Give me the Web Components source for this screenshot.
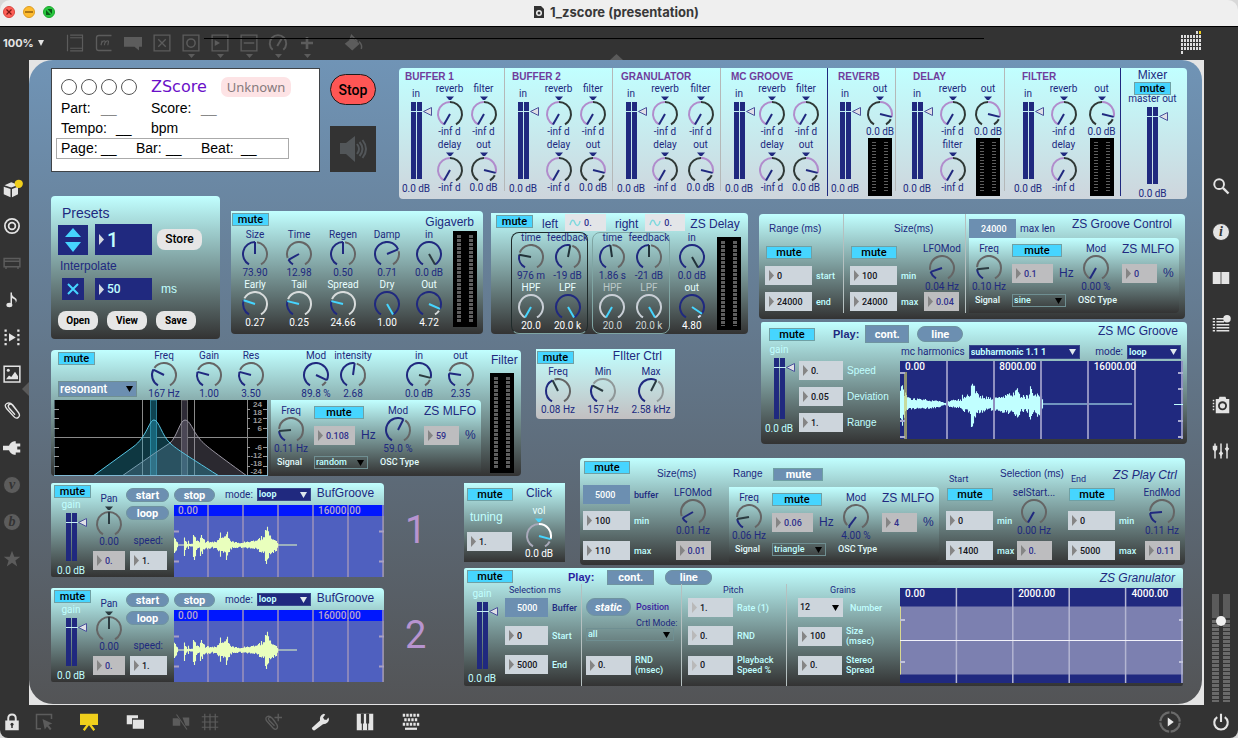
<!DOCTYPE html>
<html lang="en">
<head>
<meta charset="utf-8">
<title>1_zscore (presentation)</title>
<style>
html,body{margin:0;padding:0;background:#d8d8d8}
body{font-family:"Liberation Sans",Arial,sans-serif;font-size:10px;color:#20297f}
</style>
</head>
<body>
<zs-window></zs-window>
<script>
const NAVY='#20297f', CYAN='#c1ffff', SKY='#46d5ff';

const BASE = `
*{box-sizing:border-box}
:host{display:block;font:10px/12px "Liberation Sans",Arial,sans-serif;color:${NAVY}}
button{font:500 11px/11px Roboto,sans-serif;padding:0;margin:0;color:#000;white-space:nowrap;flex:none;display:block}
.mute{width:37px;height:13px;background:${SKY};border:1px solid #6fa0a4}
.mute.mid{width:46px}.mute.wide{width:50px}
.mute.off{background:#6c8fb1;color:#fff;font-weight:700}
.pill{height:14px;width:43px;border-radius:7px;background:#6c8fb1;border:1px solid #6f93a0;color:#fff;font-weight:700}
.sq{border-radius:0}
h2{font:12px/14px "Liberation Sans",Arial,sans-serif;margin:0;white-space:nowrap}
.panel{background:linear-gradient(#c1ffff,#333);border-radius:4px}
.row{display:flex}.col{display:flex;flex-direction:column}
.ice{color:${CYAN}}
.nw{white-space:nowrap}
`;
function define(tag, css, render){
  customElements.define(tag, class extends HTMLElement{
    connectedCallback(){
      if(this.shadowRoot) return;
      const root=this.attachShadow({mode:'open'});
      const t=document.createElement('template');
      t.innerHTML=`<style>${BASE}${css}</style>${render(this)}`;
      root.append(t.content.cloneNode(true));
    }
  });
}
const at=(e,n,d='')=>e.hasAttribute(n)?e.getAttribute(n):d;

/* rotary dial: label, arc with needle, value */
define('zs-dial',`
:host{width:36px;flex:none}
label{display:flex;flex-direction:column;align-items:center;position:relative;font:400 10px/12px Roboto,sans-serif;white-space:nowrap}
svg{display:block}
.t{color:var(--label,${NAVY})}.v{color:var(--value,${NAVY})}
input{position:absolute;left:0;top:12px;width:100%;height:26px;margin:0;opacity:0}
`,e=>{
  const a=+at(e,'a',-150), bi=e.hasAttribute('bi'), cy=bi?19:13, cx=14, R=12, h=bi?31:26;
  const fill=at(e,'fill',NAVY), rest=at(e,'rest','#656565'), needle=at(e,'needle',NAVY);
  const p=(d,r=R)=>(cx+r*Math.sin(d*Math.PI/180)).toFixed(2)+' '+(cy-r*Math.cos(d*Math.PI/180)).toFixed(2);
  const arc=(s,t,c)=>t-s<1?'':`<path d="M${p(s)}A${R} ${R} 0 ${t-s>180?1:0} 1 ${p(t)}" fill="none" stroke="${c}" stroke-width="2"/>`;
  let g='';
  if(bi){const lo=Math.min(0,a),hi=Math.max(0,a);g=arc(-150,lo,rest)+arc(lo,hi,fill)+arc(hi+(a>0?12:0),150,rest);}
  else g=arc(-150,a,fill)+arc(Math.min(150,a+(a>-150&&a<150?10:0)),150,rest);
  if(bi)g+=`<path d="M${cx-4} 1.5h8l-3 3.5h-2z" fill="${at(e,'tri',NAVY)}"/>`;
  g+=`<path d="M${cx} ${cy}L${p(a)}" stroke="${needle}" stroke-width="2"/>`;
  return `<label><span class="t">${at(e,'label')}</span><svg width="28" height="${h}" aria-hidden="true">${g}</svg><span class="v">${at(e,'value')}</span><input type="range" min="-150" max="150" value="${a}"></label>`;
});

/* two-bar gain slider */
define('zs-gain',`
:host{width:32px;flex:none}
label{display:flex;flex-direction:column;align-items:center;position:relative;font:400 10px/12px Roboto,sans-serif;white-space:nowrap;color:var(--gain,${NAVY})}
svg{display:block;overflow:visible;margin:2px 0 4px}
input{position:absolute;left:0;top:14px;width:100%;height:calc(100% - 28px);margin:0;opacity:0}
`,e=>{
  const h=+at(e,'h',77);
  return `<label><span>${at(e,'label')}</span><svg width="11" height="${h}" aria-hidden="true"><path d="M0 0h5v${h}h-5zM6 0h5v${h}h-5z" fill="${NAVY}"/><path d="M0 9.5h12" stroke="#c5eef3"/><path d="M12.500 9.500L20.500 5.500V13.500Z" fill="#dfdfe6" stroke="#4a519b"/></svg><span>0.0 dB</span><input type="range" value="80"></label>`;
});

/* number box with its caption */
define('zs-num',`
:host{flex:none}
label{display:flex;align-items:center}
.b{display:flex;align-items:center;gap:3px;padding-left:4px;height:var(--h,19px);background:#cdd5dc;color:#15151c;flex:none}
.b.gray{background:#bdbdbf;color:#30318c}
.b.navy{background:${NAVY};color:${CYAN}}
.b.max{background:#6c8fb1;color:#fff;padding-left:4px}
.b.wave{background:#e3e5e8;color:#30318c}
svg{display:block;flex:none}
input{font:500 var(--fs,9px)/12px Roboto,sans-serif;color:inherit;border:0;padding:0;margin:0;background:none;min-width:0;width:100%;outline:0}
.navy input{line-height:22px}
.c{margin-left:4px;color:var(--cap,${CYAN});white-space:pre-line;line-height:10px;font:var(--cf,500 9px/10px Roboto,sans-serif)}
`,e=>{
  const t=at(e,'tone'), w=at(e,'w',47), ic={max:'<svg width="5" height="1"></svg>',wave:'<svg width="12" height="8" fill="none" stroke="#7fd9de" stroke-width="1.500"><path d="M1 6C3-1 5 1 6 4S10 8 11 2"/></svg>'}[t]||`<svg width="5" height="11"><path d="M0 0L5 5.500L0 11Z" fill="${at(e,'tri','#858585')}"/></svg>`;
  const c=at(e,'label');
  return `<label><span class="b ${t}" style="width:${w}px">${ic}<input value="${at(e,'value')}" ${c?'':`aria-label="${at(e,'name','value')}"`}></span>${c?`<span class="c">${c}</span>`:''}</label>`;
});

/* drop-down */
define('zs-menu',`
:host{flex:none}
label{display:flex;align-items:center;gap:4px;color:${NAVY};font:400 10px/12px Roboto,sans-serif}
span.w{position:relative;display:block}
select{appearance:none;display:block;width:100%;height:var(--h,13px);border:1px solid var(--bd,#6f8f92);border-radius:0;margin:0;padding:0 0 0 1px;background:var(--bg,transparent);color:var(--fg,${CYAN});font:var(--fw,700) var(--fs,9px)/11px Roboto,sans-serif}
svg{position:absolute;right:4px;top:calc(50% - 3px);pointer-events:none}
`,e=>`<label>${at(e,'label')?`<span>${at(e,'label')}</span>`:''}<span class="w" style="width:${at(e,'w',54)}px"><select ${at(e,'label')?'':`aria-label="${at(e,'name','menu')}"`}><option>${at(e,'value')}</option></select><svg width="7" height="6"><path d="M0 0h7L3.500 6z" fill="${at(e,'tri','#000')}"/></svg></span></label>`);

/* level meter */
define('zs-meter',`
:host{width:24px;background:#000;flex:none;padding:4px;height:var(--mh,96px)}
div{height:100%;display:flex;justify-content:space-between}
i{width:4px;background:repeating-linear-gradient(#5e5e5e 0 var(--on,3px),#000 var(--on,3px) var(--pitch,4px))}
`,()=>`<div><i></i><i></i></div>`);

/* modulation LFO */
define('zs-mlfo',`
:host{height:75px;padding:5px 0 0 2px;display:grid;grid-template-columns:36px 69px 42px 1fr;grid-template-rows:51px 13px;column-gap:1px;background:linear-gradient(#c1ffff,#333);border-radius:0 4px 4px 0}
.hz{font:12px/19px "Liberation Sans",Arial,sans-serif}
.c2{padding:1px 0 0 4px;display:grid;grid-template-rows:20px 19px}
.c4{display:grid;grid-template-rows:21px 19px;padding-left:1px;white-space:nowrap}
h2{line-height:12px}
.row{gap:6px}
.lab{font:500 9px/13px Roboto,sans-serif;color:#e2fafa}
.foot{grid-column:1/-1;display:flex;padding-left:4px}
.foot b{width:37px;font-weight:500}.foot em{font-style:normal;margin-left:12px}
.foot zs-menu{--fw:500}
`,e=>`<zs-dial label="Freq" value="${at(e,'freq')}" a="${at(e,'fa')}" needle="#2b3b40"></zs-dial>
<div class="c2"><button class="mute wide">mute</button><div class="row"><zs-num tone="gray" w="41" value="${at(e,'hz')}" name="Hz"></zs-num><span class="hz">Hz</span></div></div>
<zs-dial label="Mod" value="${at(e,'mod')}" a="${at(e,'ma')}"></zs-dial>
<div class="c4"><h2>ZS MLFO</h2><div class="row"><zs-num tone="gray" w="35" value="${at(e,'pc')}" name="percent"></zs-num><span class="hz">%</span></div></div>
<div class="foot"><b class="lab">Signal</b><zs-menu value="${at(e,'sig')}" name="Signal"></zs-menu><em class="lab">OSC Type</em></div>`);

/* deterministic waveform outline from an envelope of [x, amplitude] pairs */
function wave(env,mid,color,seed){
  let s=seed,d='';
  const rnd=()=>{s=(s*16807)%2147483647;return s/2147483647;};
  for(let k=0;k<env.length-1;k++){
    const [x0,a0]=env[k],[x1,a1]=env[k+1];
    for(let x=x0;x<x1;x++){
      const a=a0+(a1-a0)*(x-x0)/(x1-x0), j=a<1?1:.55+.45*rnd(), u=Math.max(.5,a*j), l=Math.max(.5,a*(a<1?1:.55+.45*rnd()));
      d+=`M${x+.5} ${(mid-u).toFixed(1)}V${(mid+l).toFixed(1)}`;
    }
  }
  return `<path d="${d}" stroke="${color}" stroke-width="1.100" fill="none"/>`;
}
const WAVES={
  buf:{w:210,h:72,n:6,labels:['0.00','','','','16000.00'],draw:()=>{
    let g='<path d="M0 0h210v72h-210z" fill="#4f60bf"/><path d="M0 0h210v11h-210z" fill="#0017fe"/><path d="M209.500 11v61" stroke="#8a8a55"/>';
    for(let i=1;i<=6;i++)g+=`<path d="M${i*35-1} 0v72" stroke="#9c93bb" stroke-opacity=".75" stroke-width="2"/>`;
    g+='<path d="M0 26.500h5M0 56.500h5M205 26.500h5M205 56.500h5" stroke="#a9a0c4" stroke-width="2"/>';
    return g+wave([[0,13],[2,6],[4,.6],[9,.6],[10,11],[11,5],[13,1.5],[14,5],[15,1.500],[18,2],[19,17],[21,13],[22,6],[25,4],[26,13],[28,11],[29,7],[31,4],[34,5],[37,3],[42,4],[45,8],[46,14],[48,8],[51,9],[52,19],[53,17],[54,8],[58,4],[66,3],[74,4],[82,5],[87,9],[90,8],[91,25],[93,24],[94,18],[96,10],[102,6],[104,.5],[123,.5]],40,'#e9ffbd',77);
  }},
  mc:{w:283,h:78,n:6,labels:['0.00','','8000.00','','16000.00'],draw:()=>{
    let g=`<path d="M0 0h283v78h-283z" fill="${NAVY}"/>`;
    g+=wave([[0,24],[2,24],[4,14],[7,8],[10,6],[20,6],[38,4],[44,1],[48,3],[55,5],[61,5],[62,10],[65,8],[70,12],[71,28],[73,25],[75,15],[78,10],[90,7],[103,9],[110,11],[117,16],[120,9],[128,9],[130,18],[133,10],[138,15],[142,6],[143,.5],[232,.5]],43,CYAN,31);
    for(let i=1;i<=6;i++)g+=`<path d="M${i*47} 0v78" stroke="#8f90c0" stroke-width="2"/>`;
    return g+'<path d="M4 11h3v67h-3z" fill="#c9c96a" fill-opacity=".65"/><path d="M0 12h5M0 60h5M0 76h5M278 12h5M278 28h5M278 60h5M278 76h5" stroke="#a9abd0" stroke-width="2"/><path d="M274 43.500h9" stroke="#c1ffff"/>';
  }},
  gran:{w:283,h:95,n:5,labels:['0.00','','2000.00','','4000.00'],draw:()=>{
    let g=`<path d="M0 0h283v95h-283z" fill="${NAVY}"/><path d="M0 18.500h283v68h-283z" fill="#7c80b0"/><path d="M.5 18.500v68" stroke="#d8d890"/>`;
    for(let i=1;i<=5;i++)g+=`<path d="M${i*56.4} 0v95" stroke="#b3b5d2" stroke-width="1.500"/>`;
    return g+'<path d="M0 52.500h283" stroke="#f2f2fa"/><path d="M0 32h5M0 74h5M279 32h4M279 74h4" stroke="#c0c2da" stroke-width="2"/>';
  }}
};
define('zs-wave',`
:host{position:relative;min-width:0}
svg{position:absolute;left:0;top:0;width:100%;height:100%}
div{position:relative;display:grid;font:500 10px/12px Roboto,sans-serif;color:var(--wl,#fff)}
span{padding-left:var(--wp,5px);white-space:nowrap;min-width:0}
`,e=>{const k=WAVES[at(e,'kind')];return `<svg viewBox="0 0 ${k.w} ${k.h}" preserveAspectRatio="none" aria-hidden="true">${k.draw()}</svg><div style="grid-template-columns:repeat(${k.n},1fr)">${k.labels.map(t=>`<span>${t}</span>`).join('')}</div>`;});

/* score status */
define('zs-score',`
:host{width:269px;height:104px;background:#fff;border:1px solid #3f4347;padding:7px 4px 0;font-size:14px;line-height:20px;color:#000}
.g{display:grid;grid-template-columns:40px 50px 50px auto;padding-left:5px;height:20px;white-space:nowrap}
.top{display:flex;align-items:center;padding-left:5px;height:22px}
.top svg{margin-right:14px}
.top b{font:16px/20px "DejaVu Sans",sans-serif;color:#6a10c8;width:70px}
.top span{background:#fde3e5;border-radius:7px;font:13px/20px "Noto Sans",sans-serif;color:#857a7c;width:70px;text-align:center}
.box{border:1px solid #aaa;width:233px;display:grid;grid-template-columns:40px 35px 30px 35px 40px auto;padding-left:4px;height:21px;line-height:19px;white-space:nowrap}
u{text-decoration:none;color:#888}u.k{color:#000}
`,()=>`<div class="top"><svg width="76" height="18" fill="none" stroke="#555"><circle cx="8" cy="9" r="7.500"/><circle cx="28" cy="9" r="7.500"/><circle cx="48" cy="9" r="7.500"/><circle cx="68" cy="9" r="7.500"/></svg><b>ZScore</b><span>Unknown</span></div>
<div class="g"><span>Part:</span><u>__</u><span>Score:</span><u>__</u></div>
<div class="g" style="grid-template-columns:55px 35px auto"><span>Tempo:</span><u class="k">__</u><span>bpm</span></div>
<div class="box"><span>Page:</span><u class="k">__</u><span>Bar:</span><u class="k">__</u><span>Beat:</span><u class="k">__</u></div>`);

/* mixer */
define('zs-channel',`
:host{width:var(--cw);flex:none;padding-top:3px;border-right:1px solid var(--div,#b5b8b8)}
h3{font:700 10px/12px "Liberation Sans",Arial,sans-serif;color:#6f3c9c;margin:0;padding-left:var(--tp);white-space:nowrap}
.g{display:grid;grid-template-columns:var(--cols,34px 33px 35px);margin-left:var(--lead,0)}
.s{padding-top:5px;width:34px}
.d{display:grid;row-gap:1px;justify-items:center;align-content:start}
zs-dial{width:30px}
zs-meter{--mh:58px;--on:1px;--pitch:3px}
.mt{row-gap:0}
`,e=>{
  const P='#b18ccc';
  const cell=t=>t==='meter'?'<zs-meter></zs-meter>':`<zs-dial bi label="${t}" value="${t==='out'?'0.0 dB':'-inf d'}" a="${t==='out'?104:-150}" fill="${P}" rest="#2f3836"></zs-dial>`;
  return `<h3>${at(e,'name')}</h3><div class="g"><zs-gain class="s" label="in" h="77"></zs-gain>${at(e,'cells').split('|').map(c=>`<div class="d ${c.includes('meter')?'mt':''}">${c.split(',').map(cell).join('')}</div>`).join('')}</div>`;
});
define('zs-mixer',`
:host{flex:1;height:131px;background:linear-gradient(#c1ffff,#ced5dc);border-radius:4px;display:flex}
zs-channel{height:123px}
zs-channel.navy{height:128px}
.out{flex:1;display:flex;flex-direction:column;align-items:center;padding:1px 3px 0 0}
.out h2{line-height:13px}
.out zs-gain{margin-top:-2px}
`,()=>{
  const c=(n,w,tp,cells,x='')=>`<zs-channel class="${x.includes('div')?'navy':''}" name="${n}" cells="${cells}" style="--cw:${w}px;--tp:${tp}px;${x}"></zs-channel>`;
  const q='reverb,delay|filter,out';
  return c('BUFFER 1',106,6,q)+c('BUFFER 2',108,7,q,'--lead:1px;--cols:34px 37px 32px')+c('GRANULATOR',108,8,q,'--lead:1px;--cols:34px 34px 37px')+c('MC GROOVE',107,10,q,'--lead:1px;--cols:34px 32px 36px;--div:#20297f')
  +c('REVERB',68,10,'out,meter','--cols:33px 38px')+c('DELAY',109,17,'reverb,filter|out,meter','--lead:4px;--cols:34px 37px 34px')+c('FILTER',116,17,'reverb,delay|out,meter','--lead:6px;--cols:33px 39px 37px;--div:#20297f')
  +`<div class="out"><h2>Mixer</h2><button class="mute">mute</button><zs-gain label="master out" h="77"></zs-gain></div>`;
});

define('zs-presets',`
:host{width:169px;height:143px}
.panel{height:100%;padding:8px 7px 0}
h2{font-size:14px;line-height:18px;padding-left:4px}
.r{display:flex;align-items:center}
.ud{width:30px;height:30px;background:${NAVY};border:0}
.big{--h:31px;--fs:20px;margin:0 5px 0 7px}
.b{border:0;background:#e6e6e6;border-radius:8px}
.x{width:22px;height:22px;background:${NAVY};border:0;margin:0 11px 0 4px}
.sm{--h:22px;--fs:12px}
.f{display:flex;justify-content:flex-start;gap:9px;margin-top:11px}
.f .b{height:19px;width:40px;font-weight:700;font-size:10px}
`,()=>`<div class="panel"><h2>Presets</h2><div class="r" style="margin-top:2px"><button class="ud" aria-label="Step preset"><svg width="30" height="30" style="display:block"><path d="M7 12L15 3L23 12ZM7 17H23L15 27Z" fill="${SKY}"/></svg></button><zs-num class="big" tone="navy" w="57" value="1" tri="#d4d8e0" name="Preset"></zs-num><button class="b" style="width:45px;height:21px;font-size:12px">Store</button></div>
<h2 style="font-size:12px;line-height:23px;padding-left:2px">Interpolate</h2>
<div class="r"><button class="x" aria-label="Interpolate"><svg width="22" height="22" style="display:block"><path d="M6 6L16 16M16 6L6 16" stroke="${SKY}" stroke-width="2"/></svg></button><zs-num class="sm" tone="navy" w="57" value="50" tri="#d4d8e0" name="Interpolate time"></zs-num><span class="ice" style="font-size:12px;margin-left:9px">ms</span></div>
<div class="f"><button class="b">Open</button><button class="b">View</button><button class="b">Save</button></div></div>`);

define('zs-gigaverb',`
:host{width:252px;height:123px;margin-top:15px}
.panel{height:100%;padding:2px 6px 0 1px;border-radius:0 4px 4px 4px}
.h{justify-content:space-between;height:16px;padding-right:3px}
.h h2{line-height:18px}
.b{justify-content:space-between}
.g{display:grid;grid-template-columns:44px 44px 44px 44px 40px;justify-items:center;padding-left:1px}
.w{--label:#e8fefe;--value:#fff}
zs-meter{margin-top:2px}
`,()=>{
  const r=[['Size','73.90',0],['Time','12.98',-119],['Regen','0.50',0],['Damp','0.71',67],['in','0.0 dB',150,'#2b3b40']];
  const s=[['Early','0.27',-72],['Tail','0.25',-76],['Spread','24.66',-76],['Dry','1.00',150],['Out','4.72',114]];
  return `<div class="panel"><div class="row h"><button class="mute">mute</button><h2>Gigaverb</h2></div><div class="row b"><div class="g">${r.map(d=>`<zs-dial label="${d[0]}" value="${d[1]}" a="${d[2]}" needle="${d[3]||NAVY}"></zs-dial>`).join('')}${s.map(d=>`<zs-dial class="w" label="${d[0]}" value="${d[1]}" a="${d[2]}" needle="${SKY}" rest="#d8dcdc"></zs-dial>`).join('')}</div><zs-meter></zs-meter></div></div>`;
});

define('zs-delay',`
:host{width:257px;height:121px;margin-top:17px}
.panel{height:100%;border-radius:0 4px 4px 4px;padding:0 7px 0 5px}
.h{height:19px;gap:9px}
.h .mute{margin-top:2px}.h h2{line-height:22px}
.h zs-num{--h:17px;margin-top:1px}
.b{padding-left:15px}
.box{width:79px;height:102px;border:1px solid #1f2a2a;border-bottom-color:#7fa5a3;border-radius:8px;display:grid;grid-template-columns:36px 37px;margin-right:4px;padding-left:1px}
.box zs-dial{margin:-1px 0 1px;justify-self:center}
.box.r{border-color:#7fa5a3}
.io{width:38px;padding-top:0}
.w{--label:#e8fefe;--value:#fff}
.r .w{--label:#bcc8c8;--value:#cfd6d6}
zs-meter{margin:5px 0 0 6px;--mh:93px}
`,()=>{
  const D=(l,v,a,n,c='',rest='#656565')=>`<zs-dial class="${c}" label="${l}" value="${v}" a="${a}" needle="${n}" rest="${rest}"></zs-dial>`;
  const K='#22333a';
  return `<div class="panel"><div class="row h"><button class="mute">mute</button><h2>left</h2><zs-num tone="wave" w="41" value="0." name="left" style="margin-left:-2px"></zs-num><h2>right</h2><zs-num tone="wave" w="40" value="0." name="right" style="margin-left:-2px"></zs-num><h2 style="margin-left:-4px">ZS Delay</h2></div>
<div class="row b"><div class="box">${D('time','976 m',-79,K)}${D('feedback','-19 dB',11,K)}${D('HPF','20.0',-150,SKY,'w','#c9cfd6')}${D('LPF','20.0 k',150,SKY,'w')}</div>
<div class="box r">${D('time','1.86 s',-8,K)}${D('feedback','-21 dB',0,K)}${D('HPF','20.0',-150,SKY,'w','#c9cfd6')}<zs-dial class="w" label="LPF" value="20.0 k" a="150" needle="${SKY}" fill="#c9cfd6"></zs-dial></div>
<div class="io">${D('in','0.0 dB',150,K)}${D('out','4.80',124,SKY,'w','#dde')}</div><zs-meter></zs-meter></div></div>`;
});

define('zs-groove-control',`
:host{height:105px;margin-right:2px}
.panel{height:100%;display:flex}
.c{display:grid;grid-template-rows:29px 23px 26px 21px;height:99px;border-right:1px solid #b5c0c0;padding-left:6px;align-items:start;flex:none}
.c>span{padding:9px 0 0 4px}
.mute{margin:3px 0 0 1px}
.c2{grid-template-columns:74px 42px}
.c2>span{grid-column:1/3;padding-left:44px}
.c2 zs-dial{grid-row:2/4;grid-column:2}
.c2 .mute,.c2 .n{grid-column:1}
.c3{flex:1;padding-left:3px;min-width:0}
.t{height:24px;display:flex;justify-content:space-between;padding-right:13px}
.t h2{line-height:20px}
.t zs-num{margin-top:5px;--cf:400 10px/10px Roboto,sans-serif;--cap:${NAVY}}
zs-mlfo{margin-right:6px}
`,()=>`<div class="panel"><div class="c" style="width:85px"><span class="nw">Range (ms)</span><button class="mute mid">mute</button><zs-num value="0" label="start"></zs-num><zs-num value="24000" label="end"></zs-num></div>
<div class="c c2" style="width:122px"><span>Size(ms)</span><button class="mute mid">mute</button><zs-dial label="LFOMod" value="0.04 Hz" a="-109"></zs-dial><zs-num class="n" value="100" label="min"></zs-num><zs-num class="n" value="24000" label="max"></zs-num><zs-num tone="gray" w="35" value="0.04" name="LFO mod"></zs-num></div>
<div class="c3"><div class="t"><zs-num tone="max" value="24000" label="max len"></zs-num><h2>ZS Groove Control</h2></div><zs-mlfo freq="0.10 Hz" fa="-96" hz="0.1" mod="0.00 %" ma="-150" pc="0" sig="sine"></zs-mlfo></div></div>`);

define('zs-mc-groove',`
:host{height:122px;margin:3px 0 0 2px}
.panel{height:100%;border-radius:2px 4px 4px 4px}
.h{height:22px;padding:3px 9px 0 8px;align-items:flex-start}
.h .mute{margin-top:3px}
.h b{font:700 11px/18px "Liberation Sans",Arial,sans-serif;margin:0 6px 0 18px}
.h h2{margin-left:auto;line-height:13px}
.b{padding-left:2px}
.nums{padding:17px 0 0 4px;width:105px;gap:7px;--cf:10px/12px "Liberation Sans",Arial,sans-serif}
.r{flex:1;min-width:0;padding:1px 4px 0 0}
.m{justify-content:space-between;padding:0 2px 0 1px;height:16px}
zs-menu{--bg:${NAVY};--bd:#39498c;--h:14px}
zs-wave{height:78px}
zs-gain{--gain:${CYAN}}
`,()=>`<div class="panel"><div class="row h"><button class="mute mid">mute</button><b>Play:</b><button class="pill sq" style="width:44px;height:18px">cont.</button><button class="pill" style="width:46px;height:16px;border-radius:8px;margin:1px 0 0 8px">line</button><h2>ZS MC Groove</h2></div>
<div class="row b"><zs-gain label="gain" h="61"></zs-gain><div class="col nums"><zs-num w="44" value="0." label="Speed"></zs-num><zs-num w="44" value="0.05" label="Deviation"></zs-num><zs-num w="44" value="1." label="Range"></zs-num></div>
<div class="r"><div class="row m"><zs-menu label="mc harmonics" value="subharmonic 1.1 1" w="111" tri="#dfe8ee"></zs-menu><zs-menu label="mode:" value="loop" w="54" tri="#dfe8ee"></zs-menu></div><zs-wave kind="mc"></zs-wave></div></div></div>`);

define('zs-filter',`
:host{width:470px;height:126px}
.panel{height:100%;display:flex;border-radius:4px}
.l{width:430px;flex:none}
.t{height:50px}
.sel{width:92px;padding:2px 0 0 7px;gap:16px}
.sel zs-menu{--bg:#6c8fb1;--fg:#fff;--h:16px;--fs:12px;--fw:500}
.bt{padding-left:3px;gap:3px}
svg{display:block;flex:none}
zs-mlfo{flex:1}
.r{padding:3px 0 0 9px}
.r h2{padding-left:1px}
zs-meter{--mh:100px;margin:6px 0 0}
`,()=>{
  const D=(l,v,a,w,n=NAVY)=>`<div style="width:${w}px;display:flex;justify-content:center"><zs-dial label="${l}" value="${v}" a="${a}" needle="${n}"></zs-dial></div>`;
  const ys=[[7,'24'],[15,'18'],[23,'12'],[31,'6'],[50,'-6'],[58,'-12'],[66,'-18'],[74,'-24']];
  return `<div class="panel"><div class="l"><div class="row t"><div class="col sel"><button class="mute">mute</button><zs-menu value="resonant" w="79" name="Filter type"></zs-menu></div>
${D('Freq','167 Hz',-63,42)}${D('Gain','1.00',-75,48)}${D('Res','3.50',-75,36)}<span style="width:29px"></span>${D('Mod','89.8 %',115,36)}${D('intensity','2.68',8,38)}<span style="width:26px"></span>${D('in','0.0 dB',104,42,'#2b3b40')}${D('out','2.35',-82,41)}</div>
<div class="row bt"><svg width="214" height="76" role="img" aria-label="Filter response"><path d="M0 0h214v76h-214z" fill="#000"/><path d="M0 37.500h213M88.500 0v76M140.500 0v76M193.500 0v76" stroke="#8a8a8a"/><path d="M0 9.500h5M0 18.500h5M0 28.500h5M0 47.500h5M0 56.500h5M0 66.500h5M193 9.500h3M193 18.500h3M193 28.500h3M193 47.500h3M193 56.500h3M193 66.500h3M209 9.500h4M209 18.500h4M209 28.500h4M209 47.500h4M209 56.500h4M209 66.500h4" stroke="#999"/>
<path d="M127.500 0h6v76h-6z" fill="#2e2b36" stroke="#666"/><path d="M96.500 0h6v76h-6z" fill="#0e4452" stroke="#2c7c92"/>
<path d="M68 76L101 53L116 43C123 37 126 20 131 20S139 31 145 38C149 44 160 52 193 76Z" fill="#8d87a0" fill-opacity=".3" stroke="#9b97a3"/>
<path d="M39 76L79 47C93 37 95 20 100 20S108 36 116 43C121 48 129 53 165 76Z" fill="#2ba6c4" fill-opacity=".33" stroke="#58c6e4"/>
<path d="M0 0v76M213.500 0v76" stroke="#8fb4c4"/><path d="M0 75.500h214" stroke="#7fb9d4"/>
<g font-family="Liberation Sans" font-size="8" font-weight="700" fill="#9a9a9a" text-anchor="end">${ys.map(y=>`<text x="208" y="${y[0]}">${y[1]}</text>`).join('')}</g></svg><zs-mlfo freq="0.11 Hz" fa="-95" hz="0.108" mod="59.0 %" ma="27" pc="59" sig="random"></zs-mlfo></div></div>
<div class="r"><h2>Filter</h2><zs-meter></zs-meter></div></div>`;
});

define('zs-filter-ctrl',`
:host{width:139px;height:70px;background:linear-gradient(#c1ffff,#c2bfc1);border-radius:0 0 4px 4px;padding:2px 0 0 1px}
.h{justify-content:space-between;height:15px;padding-right:13px}
h2{line-height:11px}
.g{display:grid;grid-template-columns:42px 48px 48px;justify-items:center}
`,()=>`<div class="row h"><button class="mute">mute</button><h2>FIlter Ctrl</h2></div><div class="g"><zs-dial label="Freq" value="0.08 Hz" a="-27" needle="#2b3b40"></zs-dial><zs-dial label="Min" value="157 Hz" a="-62" needle="#2b3b40" rest="#8f9798"></zs-dial><zs-dial label="Max" value="2.58 kHz" a="27" needle="#2b3b40" rest="#8f9798"></zs-dial></div>`);

define('zs-bufgroove',`
:host{width:333px;height:94px;flex:none}
.panel{height:100%;display:flex;padding:2px 0 0 3px;border-radius:2px 4px 2px 2px}
.a{width:38px}
.a zs-gain{--gain:${CYAN};margin-top:1px;width:34px}
.b{width:34px;padding-top:8px;align-items:center}
.b zs-num{margin-top:3px}
.c{width:48px;gap:4px;padding-top:3px}
.c span{text-align:right;padding-right:11px;margin-top:11px;font:400 10px/12px Roboto,sans-serif}
.c zs-num{padding-left:4px}
.d{flex:1;min-width:0}
.t{height:20px;padding:3px 0 0;gap:6px}
.t .pill{margin-right:4px;width:41px}
zs-menu{--bg:${NAVY};--bd:#39498c}
h2{line-height:11px}
zs-wave{height:72px;--wl:#b9a6cc;--wp:4px}
`,e=>`<div class="panel"><div class="a"><button class="mute">mute</button><zs-gain label="gain" h="48"></zs-gain></div>
<div class="col b"><zs-dial bi label="Pan" value="0.00" a="0" needle="#2b3b40" tri="#2b3b40"></zs-dial><zs-num tone="gray" w="32" value="0." name="Pan amount"></zs-num></div>
<div class="col c"><button class="pill">start</button><button class="pill">loop</button><span>speed:</span><zs-num w="37" value="1." name="Speed"></zs-num></div>
<div class="d"><div class="row t"><button class="pill">stop</button><zs-menu label="mode:" value="loop" w="54" tri="#dfe8ee"></zs-menu><h2>BufGroove</h2></div><zs-wave kind="buf"></zs-wave></div></div>`);

define('zs-click',`
:host{width:101px;height:79px}
.panel{height:100%;display:flex;border-radius:0;padding:5px 3px 0}
.l{width:53px;padding-right:4px}
.l span{font-size:12px;line-height:14px;padding-left:3px;margin:9px 0 8px}
.r{align-items:center;width:38px}
h2{line-height:11px}
.r zs-dial{margin-top:6px;--label:#e8fefe;--value:#fff}
`,()=>`<div class="panel"><div class="col l"><button class="mute mid">mute</button><span class="ice">tuning</span><zs-num w="45" value="1." name="tuning"></zs-num></div><div class="col r"><h2>Click</h2><zs-dial bi label="vol" value="0.0 dB" a="105" needle="${SKY}" tri="${SKY}" fill="#fff" rest="#aab"></zs-dial></div></div>`);

define('zs-play-ctrl',`
:host{height:107px;margin-right:2px}
.panel{height:100%;display:flex}
.c{display:grid;grid-template-columns:100%;grid-template-rows:27px 26px 30px 24px;align-items:start;flex:none}
.c zs-dial{grid-row:2/4;margin-top:2px;justify-self:center}
.c>span{padding-top:10px;white-space:nowrap}
.f>span{padding:15px 0 0 3px;font:400 9px/12px Roboto,sans-serif}
.mute{margin:3px 0 0 1px}
.k>zs-num{justify-self:center;grid-row:4}
.lfo{width:210px;height:102px}
.lfo .row{height:29px;padding:10px 0 0 4px;gap:11px}
.lfo .mute{margin:0}
h2{font-style:italic;justify-self:end;padding:10px 8px 0 0}
`,()=>{
  const F=(n,a,b,w)=>`<div class="c f" style="width:${w}px"><span>${n}</span><button class="mute mid">mute</button><zs-num value="${a}" label="min"></zs-num><zs-num value="${b}" label="max"></zs-num></div>`;
  return `<div class="panel"><div class="c" style="width:75px;padding-left:3px"><button class="mute mid">mute</button><zs-num tone="max" value="5000" label="buffer" style="--cap:${NAVY}"></zs-num><zs-num value="100" label="min"></zs-num><zs-num value="110" label="max"></zs-num></div>
<div class="c k" style="width:74px;padding-left:2px"><span>Size(ms)</span><zs-dial label="LFOMod" value="0.01 Hz" a="-120"></zs-dial><zs-num tone="gray" w="35" value="0.01" name="LFO mod"></zs-num></div>
<div class="lfo"><div class="row"><span>Range</span><button class="mute wide off">mute</button></div><zs-mlfo freq="0.06 Hz" fa="-100" hz="0.06" mod="4.00 %" ma="-143" pc="4" sig="triangle"></zs-mlfo></div>
<div style="width:7px"></div>${F('Start','0','1400',54)}
<div class="c k" style="width:68px"><span>Selection (ms)</span><zs-dial label="selStart..." value="0.00 Hz" a="-150"></zs-dial><zs-num tone="gray" w="35" value="0." name="Start mod"></zs-num></div>
${F('End','0','5000',71)}
<div class="c k" style="width:46px"><h2>ZS Play Ctrl</h2><zs-dial label="EndMod" value="0.11 Hz" a="-95"></zs-dial><zs-num tone="gray" w="35" value="0.11" name="End mod"></zs-num></div></div>`;
});

define('zs-granulator',`
:host{height:118px;margin-right:4px}
.panel{height:100%;border-radius:2px;--cf:500 9px/10px Roboto,sans-serif}
.h{height:16px;padding:2px 8px 0 3px}
.h b{font:700 11px/14px "Liberation Sans",Arial,sans-serif;margin:0 13px 0 55px;color:#2a1fa0}
.h h2{margin-left:auto;font-style:italic;line-height:16px}
.body{height:102px}
.c{display:grid;grid-template-rows:14px 28px 29px 31px;border-right:1px solid #b5c0c0;padding-left:6px;flex:none;align-items:start}
.c>span,.lab{font:400 9px/12px Roboto,sans-serif;white-space:nowrap}
.lab{font-weight:500}
.p{grid-template-rows:14px 20px 10px 27px 31px;padding-left:4px}
.w{flex:1;padding:4px 0 3px;min-width:0;display:grid}
zs-gain{--gain:${CYAN};margin:4px 4px 0 2px}
.st{width:45px;height:18px;border-radius:9px;font-style:italic;margin-right:5px}
zs-menu{--fw:500}
zs-menu.n{--h:19px;--bg:#cdd5dc;--bd:#cdd5dc;--fg:#15151c}
.pair{display:flex;align-items:center}
`,()=>`<div class="panel"><div class="row h"><button class="mute mid">mute</button><b>Play:</b><button class="pill sq" style="width:47px;height:15px">cont.</button><button class="pill" style="width:47px;height:15px;margin-left:11px">line</button><h2>ZS Granulator</h2></div>
<div class="row body"><zs-gain label="gain" h="67"></zs-gain>
<div class="c" style="width:80px;padding-left:3px"><span style="padding-left:4px">Selection ms</span><zs-num tone="max" w="43" value="5000" label="Buffer" style="--cap:${NAVY}"></zs-num><zs-num w="43" value="0" label="Start"></zs-num><zs-num w="43" value="5000" label="End"></zs-num></div>
<div class="c p" style="width:100px"><span></span><div class="row" style="align-items:center"><button class="pill st">static</button><span class="lab" style="color:#3a1fa0">Position</span></div><span style="padding-left:50px;line-height:10px">Crtl Mode:</span><zs-menu w="88" value="all" name="Ctrl mode"></zs-menu><zs-num w="45" value="0." label="RND&#10;(msec)"></zs-num></div>
<div class="c" style="width:105px"><span style="padding-left:35px">Pitch</span><zs-num w="45" tri="#b9b9b9" value="1." label="Rate (1)"></zs-num><zs-num w="45" tri="#b9b9b9" value="0." label="RND"></zs-num><zs-num w="45" tri="#b9b9b9" value="0" label="Playback&#10;Speed %"></zs-num></div>
<div class="c" style="width:113px;border:0;padding-left:11px"><span style="padding-left:32px">Grains</span><div class="pair"><zs-menu class="n" w="45" value="12" name="Number"></zs-menu><span class="lab ice" style="padding-left:7px">Number</span></div><zs-num w="44" value="100" label="Size&#10;(msec)"></zs-num><zs-num w="44" value="0." label="Stereo&#10;Spread"></zs-num></div>
<div class="w"><zs-wave kind="gran"></zs-wave></div></div></div>`);

/* the patch itself */
define('zs-patcher',`
:host{background:#e4e4e4;padding:0 2px 1px 0;flex:1;min-width:0}
.bg{background:linear-gradient(#7094b6,#535456);border-radius:24px 20px 24px 24px;padding:8px 15px 18px 22px;min-height:100%}
.top{display:flex;align-items:flex-start;height:128px}
.ctl{width:46px;margin:0 23px 0 10px}
.stop{width:46px;height:31px;border-radius:16px;background:#ff5655;border:1px solid #1c1c1c;font:500 14px/20px Roboto,sans-serif;margin-top:6px}
.spk{width:46px;height:46px;background:#333;border:0;margin-top:21px}
.g{display:grid;grid-template-columns:413px 116px 179px minmax(428px,1fr);grid-template-rows:154px 108px 25px 85px 118px}
.a{grid-area:1/1/2/4;display:flex;align-items:flex-start}
.a zs-gigaverb{margin-left:11px}.a zs-delay{margin-left:8px}
.b{grid-area:1/4/3/5;padding-top:18px}
.c{grid-area:2/1/4/4;display:flex;gap:15px;align-items:flex-start}
.c zs-filter-ctrl{margin-top:-1px}
.d{grid-area:4/1/6/2;display:grid;gap:11px;align-content:start}
.d div{display:flex;align-items:center;gap:21px}
.d b{font:400 38px/40px Roboto,"Liberation Sans",sans-serif;color:#b794d0}
.e{grid-area:4/2/5/3}.f{grid-area:3/3/5/5}.h{grid-area:5/2/6/5}
`,()=>`<div class="bg"><div class="top"><zs-score></zs-score><div class="ctl"><button class="stop">Stop</button><button class="spk" aria-label="Audio"><svg width="44" height="46" viewBox="0 0 44 46"><path d="M9 17h6l9-7v26l-9-8H9z" fill="#525659"/><path d="M26 18q4 5 0 10M28.500 16q6 7 0 14M31.500 14q7 9 0 18" fill="none" stroke="#525659" stroke-width="2"/></svg></button></div><zs-mixer></zs-mixer></div>
<div class="g"><div class="a"><zs-presets></zs-presets><zs-gigaverb></zs-gigaverb><zs-delay></zs-delay></div>
<div class="b"><zs-groove-control></zs-groove-control><zs-mc-groove></zs-mc-groove></div>
<div class="c"><zs-filter></zs-filter><zs-filter-ctrl></zs-filter-ctrl></div>
<div class="d"><div><zs-bufgroove></zs-bufgroove><b>1</b></div><div><zs-bufgroove></zs-bufgroove><b>2</b></div></div>
<zs-click class="e"></zs-click><zs-play-ctrl class="f"></zs-play-ctrl><zs-granulator class="h"></zs-granulator></div></div>`);

/* icons */
const ICONS={
  box:'<path d="M2 1v22M5.500 1.500H22v21H5.500M5.500 5H22M5.500 19H22" fill="none" stroke="currentColor" stroke-width="1.600"/>',
  msg:'<path d="M22 2H5q-3 0-3 3v14q0 3 3 3h17" fill="none" stroke="currentColor" stroke-width="1.800"/><path d="M8 15l1.500-6M12.500 15l1-4.500q.3-1.500-1.200-1.500-1.800 0-3 2.500M17 15l1-4.500q.3-1.500-1.200-1.500-1.800 0-3 2.500" fill="none" stroke="currentColor" stroke-width="1.500"/>',
  comment:'<path d="M0 4h24v13h-4v5l-6-5H0z" fill="currentColor"/>',
  toggle:'<path d="M1.500 1.500h21v21h-21zM7 7l10 10M17 7L7 17" fill="none" stroke="currentColor" stroke-width="1.800"/>',
  btn:'<path d="M1.500 1.500h21v21h-21z" fill="none" stroke="currentColor" stroke-width="1.800"/><circle cx="12" cy="12" r="5.500" fill="none" stroke="currentColor" stroke-width="2"/>',
  number:'<path d="M1.500 1.500h21v21h-21z" fill="none" stroke="currentColor" stroke-width="1.800"/><path d="M5 8l7 4-7 4z" fill="currentColor"/>',
  slider:'<path d="M1.500 1.500h21v21h-21zM5 12h14" fill="none" stroke="currentColor" stroke-width="1.800"/>',
  dial:'<path d="M5 21A11 11 0 1 1 19 21M11 16L17 6" fill="none" stroke="currentColor" stroke-width="2.600"/>',
  plus:'<path d="M12 4v16M4 12h16" stroke="currentColor" stroke-width="3.500"/>',
  paint:'<path d="M1 13L11 5l10 8-10 9z" fill="currentColor"/><path d="M8 8l2-6 8 8M20 10q5 5 3 10" fill="none" stroke="currentColor" stroke-width="2"/>',
  cube:'<path d="M11 3L19 6V7L11 10L2 7Z M1 9l9 3v11l-9-4zM20 9l-8 3v11l8-4z" fill="currentColor"/><circle cx="21" cy="5" r="5.500" fill="#f0cf1c"/>',
  target:'<circle cx="12" cy="12" r="9.500" fill="none" stroke="currentColor" stroke-width="2.300"/><circle cx="12" cy="12" r="4.500" fill="none" stroke="currentColor" stroke-width="2.300"/>',
  drawer:'<path d="M1.500 6h21v11h-21zM1.500 9.500h21M4 17v3M20 17v3" fill="none" stroke="currentColor" stroke-width="2"/>',
  note:'<path d="M11 2v16" stroke="currentColor" stroke-width="2"/><ellipse cx="8.500" cy="18.500" rx="4" ry="3" fill="currentColor"/><path d="M11 2q1 5 5 7t1 7q1-5-6-7z" fill="currentColor"/>',
  film:'<path d="M2 2h3v3H2zM2 8h3v3H2zM2 14h3v3H2zM2 20h3v3H2zM19 2h3v3h-3zM19 8h3v3h-3zM19 14h3v3h-3zM19 20h3v3h-3zM8 7l9 5.500-9 5.500z" fill="currentColor"/>',
  image:'<path d="M1.500 1.500h21v21h-21z" fill="none" stroke="currentColor" stroke-width="2"/><path d="M4 19l4-5 3 2 5-7 4 6v4z" fill="currentColor"/><circle cx="7" cy="7" r="2" fill="currentColor"/>',
  clip:'<path d="M16 17L8 8q-2-3 0-4.500t4.500.5l8 10q3 4 0 6.500t-6-1L5 9Q1 4 5 2t8 2l6 8" fill="none" stroke="currentColor" stroke-width="1.800"/>',
  plug:'<path d="M8 9q2-5 7-6h2v3h6v4h-4v4h4v4h-6v3h-2q-5-1-7-6H0V9z" fill="currentColor"/>',
  star:'<path d="M12 1l3 8h8l-6.500 5 2.500 8-7-5-7 5 2.500-8L1 9h8z" fill="currentColor"/>',
  search:'<circle cx="9.500" cy="9.500" r="6.500" fill="none" stroke="currentColor" stroke-width="2.600"/><path d="M14.500 14.500L22 22" stroke="currentColor" stroke-width="3.200"/>',
  columns:'<path d="M1 4h10.500v16H1zM12.500 4H23v16H12.500z" fill="currentColor"/>',
  list:'<path d="M1 5h3M6 5h10M1 9h3M6 9h10M1 13h3M6 13h17M1 17h3M6 17h17M1 21h3M6 21h17" stroke="currentColor" stroke-width="2"/><circle cx="20" cy="5" r="5" fill="currentColor"/>',
  camera:'<path d="M1 5h2v2H1zM1 9h2v2H1zM1 13h2v2H1zM1 17h2v2H1zM5 4h4l1-3h8l1 3h4v19H5z" fill="currentColor"/><circle cx="14" cy="13" r="6" fill="#333"/><circle cx="14" cy="13" r="3.500" fill="currentColor"/>',
  mixer:'<path d="M4 2v20M12 2v20M20 2v20" stroke="currentColor" stroke-width="2"/><path d="M1 5h6v5l-3 3-3-3zM9 15l3-3 3 3-3 4zM17 9l3-3 3 3-3 4z" fill="currentColor"/>',
  lock:'<path d="M3 10h18v13H3z" fill="currentColor"/><path d="M7 11V7q0-5 5-5t5 5v4" fill="none" stroke="currentColor" stroke-width="2.600"/><circle cx="12" cy="15" r="2" fill="#333"/><path d="M12 15v5" stroke="#333" stroke-width="2"/>',
  select:'<path d="M8 21H2V2h20v6" fill="none" stroke="currentColor" stroke-width="2"/><path d="M10 8l13 6-5 2 4 5-2 2-4-5-3 4z" fill="currentColor"/>',
  present:'<path d="M0 1h24v15H0z" fill="currentColor"/><path d="M5 23l6-8M19 23l-6-8" stroke="currentColor" stroke-width="3"/>',
  layers:'<path d="M1 3h15v4H8v8H1z" fill="currentColor"/><path d="M9 9h15v12H9z" fill="currentColor"/>',
  nocable:'<path d="M1 7h7l3 3v7H1zM14 6h9v11h-5z" fill="currentColor"/><path d="M6 2l14 20" stroke="currentColor" stroke-width="1.500"/>',
  grid:'<path d="M5 1v22M12 1v22M19 1v22M1 5h22M1 12h22M1 19h22" stroke="currentColor" stroke-width="1.600"/>',
  clipplus:'<path d="M14 17L7 10q-2-3 0-4t4 1l6 8q2 4 0 6t-5-1L4 11Q1 7 4 5t7 2l4 5M19 1v10M14 6h10" fill="none" stroke="currentColor" stroke-width="1.800"/>',
  wrench:'<path d="M1 20L12 10Q11 3 17 1l2 1-3 4 2 3 3 0 2-3 1 2q0 6-8 7L5 23q-3 1-4-3z" fill="currentColor"/>',
  piano:'<path d="M1 1h22v22H1z" fill="currentColor"/><path d="M8.500 1v22M15.500 1v22" stroke="#333" stroke-width="1.500"/><path d="M6.500 1h4v13h-4zM13.500 1h4v13h-4z" fill="#333"/>',
  keys:'<path d="M1 3h22M3 9h18M1 15h22" stroke="currentColor" stroke-width="4" stroke-dasharray="3.200 1.500"/><path d="M4 21h16" stroke="currentColor" stroke-width="3"/>',
  play:'<circle cx="12" cy="12" r="13" fill="none" stroke="#6a6a6a" stroke-width="3" stroke-dasharray="18.400 2" stroke-dashoffset="-1"/><path d="M9 6l8 6-8 6z" fill="#e8e8e8"/>',
  power:'<path d="M7 5.500a9 9 0 1 0 10 0M12 1v11" fill="none" stroke="currentColor" stroke-width="2.800"/>'
};
define('zs-icon',`
:host{color:#e4e4e4;flex:none}
:host([dim]){color:#5c5c5c}:host([gold]){color:#f0cf1c}
button{border:0;background:none;color:inherit;position:relative;width:18px;height:18px}
svg{display:block;overflow:visible}
.l{width:18px;height:18px;border-radius:9px;background:currentColor;display:block;border:1px solid #333}
.l i{color:#333;font:italic 700 14px/15px "Liberation Serif",serif;display:block}
.m{position:absolute;left:6px;top:20px}
`,e=>{const n=at(e,'n'),t=at(e,'letter');return `<button aria-label="${n||t}">${t?`<span class="l"><i>${t}</i></span>`:`<svg width="18" height="18" viewBox="0 0 24 24">${ICONS[n]}</svg>`}${e.hasAttribute('menu')?'<svg class="m" width="7" height="4"><path d="M0 0h7L3.500 4z" fill="currentColor"/></svg>':''}</button>`;});

define('zs-titlebar',`
:host{height:27px;background:#efefef;border-bottom:1px solid #000;display:grid;grid-template-columns:60px 1fr 60px;align-items:center;border-radius:10px 10px 0 0}
h1{margin:0;font:700 13px/16px Inter,"Liberation Sans",sans-serif;color:#383838;display:flex;justify-content:center;align-items:center;gap:6px;padding:0 6px 3px 0}
svg{display:block}
.d{padding:0 0 2px 2px}
`,()=>`<svg class="d" width="60" height="16"><g stroke-width="1"><circle cx="7" cy="7" r="5.500" fill="#fe5f57" stroke="#d9443e"/><circle cx="27" cy="7" r="5.500" fill="#febb2e" stroke="#dc9c22"/><circle cx="47" cy="7" r="5.500" fill="#28c73f" stroke="#1ba82e"/></g><path d="M4.500 4.500l5 5M9.500 4.500l-5 5" stroke="#7e1712" stroke-width="1.200"/><path d="M23 7h8" stroke="#93600c" stroke-width="1.500"/><path d="M44 10V5l5 5zM45.500 4H50v5z" fill="#0b5c17"/></svg>
<h1><svg width="11" height="13"><path d="M1 1h7l3 3v9H1z" fill="#333"/><circle cx="6" cy="8" r="3" fill="#efefef"/><circle cx="6" cy="8" r="1.500" fill="#333"/></svg>1_zscore (presentation)</h1>`);

define('zs-toolbar',`
:host{height:33px;background:#333;display:flex;align-items:center;padding:0 0 1px 3px;position:relative;flex:none}
.z{font:700 11px/14px Inter,sans-serif;color:#e4e4e4;display:flex;align-items:center;gap:4px;width:63px}
zs-icon{margin-right:11px}
.line{position:absolute;left:204px;right:254px;top:11px;height:1px;background:#000}
.k{margin-left:auto;margin-right:37px}
.up{position:absolute;left:610px;bottom:0}
`,()=>`<span class="z">100% <svg width="6" height="6"><path d="M0 0h6L3 6z" fill="#e4e4e4"/></svg></span>${['box','msg','comment','toggle'].map(n=>`<zs-icon dim n="${n}"></zs-icon>`).join('')}${['btn','number','slider','dial','plus'].map(n=>`<zs-icon dim menu n="${n}"></zs-icon>`).join('')}<zs-icon dim n="paint" style="margin-left:17px"></zs-icon>
<div class="line"></div><svg class="up" width="13" height="6"><path d="M0 6L6.500 0L13 6z" fill="#5a5a5a"/></svg>
<svg class="k" width="20" height="24">${Array.from({length:28},(_,i)=>`<path d="M${(i%7)*3} ${4+Math.floor(i/7)*4}h2v3h-2z" fill="#ddd"/>`).join('')}<path d="M15 0h2v3h-2zM0 20h2v3h-2z" fill="#ddd"/><path d="M18 0h2v3h-2z" fill="#f0cf1c"/></svg>`);

define('zs-sidebar-left',`
:host{width:29px;background:#333;flex:none;padding:120px 0 0 3px;position:relative}
nav{display:grid;row-gap:19px}
svg{position:absolute;right:0;top:322px}
`,()=>`<nav><zs-icon n="cube"></zs-icon><zs-icon n="target"></zs-icon><zs-icon dim n="drawer"></zs-icon><zs-icon n="note"></zs-icon><zs-icon n="film"></zs-icon><zs-icon n="image"></zs-icon><zs-icon n="clip"></zs-icon><zs-icon n="plug"></zs-icon><zs-icon dim letter="v"></zs-icon><zs-icon dim letter="b"></zs-icon><zs-icon dim n="star"></zs-icon></nav><svg width="7" height="14"><path d="M7 0v14L0 7z" fill="#5a5a5a"/></svg>`);

define('zs-sidebar-right',`
:host{width:34px;background:#333;flex:none;padding:117px 0 3px 8px;display:flex;flex-direction:column;justify-content:space-between}
nav{display:grid;row-gap:28px}
.gap{margin-top:35px}
.v{position:relative;width:18px;height:108px}
.v input{position:absolute;inset:0;width:18px;height:108px;margin:0;opacity:0}
`,()=>`<nav><zs-icon n="search"></zs-icon><zs-icon letter="i"></zs-icon><zs-icon n="columns"></zs-icon><zs-icon n="list"></zs-icon><zs-icon class="gap" n="camera"></zs-icon><zs-icon n="mixer"></zs-icon></nav>
<div class="v"><svg width="18" height="108"><path d="M0 0h7v24H0zM11 0h7v24h-7z" fill="#5b5b5b"/><path d="M3.500 26v82M14.500 26v82" stroke="#6a6a6a" stroke-width="7" stroke-dasharray="3 1"/><circle cx="9" cy="27" r="5" fill="#f0f0f0"/></svg><input type="range" value="75" aria-label="Output volume"></div>`);

define('zs-footer',`
:host{height:33px;background:#333;display:flex;align-items:center;padding:1px 8px 0 3px;flex:none;border-radius:0 0 8px 8px}
.r{margin-left:auto;display:flex;gap:33px}
`,()=>{
  const g=[['lock','',0],['select','dim',14],['present','gold',27],['layers','',28],['nocable','dim',28],['grid','dim',11],['clipplus','dim',45],['wrench','',29],['piano','',27],['keys','',28]];
  return g.map(i=>`<zs-icon ${i[1]} n="${i[0]}" style="margin-left:${i[2]}px"></zs-icon>`).join('')+'<div class="r"><zs-icon n="play"></zs-icon><zs-icon n="power"></zs-icon></div>';
});

define('zs-window',`
:host{min-height:100vh;display:flex;flex-direction:column;min-width:1238px}
main{display:flex;flex:1}
`,()=>`<zs-titlebar></zs-titlebar><zs-toolbar></zs-toolbar><main><zs-sidebar-left></zs-sidebar-left><zs-patcher></zs-patcher><zs-sidebar-right></zs-sidebar-right></main><zs-footer></zs-footer>`);
</script>
</body>
</html>
